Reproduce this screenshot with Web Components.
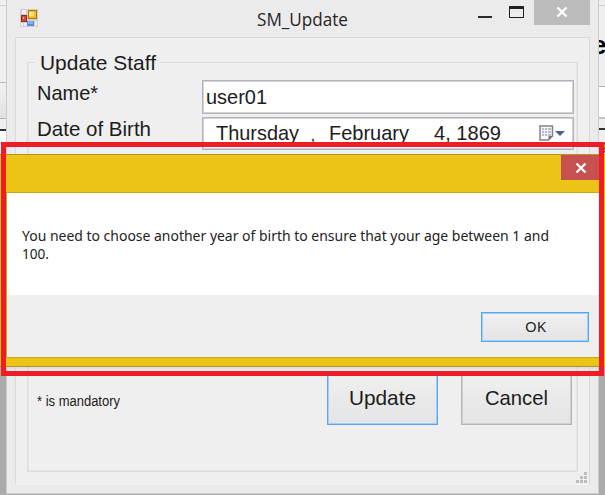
<!DOCTYPE html>
<html lang="en"><head><meta charset="utf-8"><title>SM_Update</title>
<style>
html,body{margin:0;height:100%;overflow:hidden}
body{font-family:"Liberation Sans",Arial,sans-serif;font-size:21px;color:#1c1c20}
</style></head><body>
<sm-desktop>
  <sm-window>
    <fit-label slot="title" w="91">SM_Update</fit-label>
    <group-box>
      <fit-label slot="legend" w="116">Update Staff</fit-label>
      <form-row>
        <fit-label slot="label" w="61">Name*</fit-label>
        <text-field><fit-label w="61">user01</fit-label></text-field>
      </form-row>
      <form-row class="date">
        <fit-label slot="label" w="114">Date of Birth</fit-label>
        <date-field></date-field>
      </form-row>
      <form-footer slot="footer">
        <fit-label slot="note" w="83" style="font-size:14px">* is mandatory</fit-label>
        <push-button primary><fit-label w="67">Update</fit-label></push-button>
        <push-button><fit-label w="63">Cancel</fit-label></push-button>
      </form-footer>
    </group-box>
  </sm-window>
  <message-dialog slot="overlay">
    <fit-label w="527">You need to choose another year of birth to ensure that your age between 1 and</fit-label>
    <fit-label w="27">100.</fit-label>
    <push-button slot="action" primary><fit-label w="21">OK</fit-label></push-button>
  </message-dialog>
  <highlight-frame slot="overlay"></highlight-frame>
</sm-desktop>
<script>
const define=(name,html,ready)=>customElements.define(name,class extends HTMLElement{
  connectedCallback(){
    if(this.shadowRoot)return;
    const t=document.createElement('template');t.innerHTML=html;
    this.attachShadow({mode:'open'}).append(t.content.cloneNode(true));
    if(ready)ready(this);
  }
});
const cross='<svg width="12" height="10" viewBox="0 0 12 10"><path d="M1.5 .5 10.5 9.5M10.5 .5 1.5 9.5" stroke="#fff" stroke-width="2.3"/></svg>';

define('sm-desktop',`<style>
:host{display:grid;position:relative;width:605px;height:495px;overflow:hidden;grid-template-columns:6px 593px 6px;background:#ababab}
.side{height:367px;overflow:hidden;display:flex;flex-direction:column;background:#efefef}
.side *{box-sizing:border-box;flex:none;overflow:hidden}
.a{height:6px;border-bottom:1px solid #cfcfcf}
.b{height:77px;border-bottom:1px solid #b8b8b8}
.c{height:36px;background:linear-gradient(#f1f1f1,#e1e1e1);border-bottom:1px solid #b4b4b4}
.d{height:12px;border-bottom:2px solid #333}
.e{height:236px;background:#fff}
.r1{height:81px;border-bottom:1px solid #b0b0bc;font:bold 26px/30px "Liberation Sans",sans-serif;color:#000;padding-top:24px}
.r1 span{display:block;margin-left:-7px}
.r2{height:32px;background:#fff;border-bottom:2px solid #c4c4c4}
.r3{height:11px;border-bottom:2px solid #333}
.r4{height:236px;padding-top:7px;font:14px/16px "Liberation Sans",sans-serif}
</style><div class="side"><div class="a"></div><div class="b"></div><div class="c"></div><div class="d"></div><div class="e"></div></div>
<slot></slot>
<div class="side"><div class="a"></div><div class="r1"><span>e</span></div><div class="r2"></div><div class="r3"></div><div class="r4">g</div></div>
<slot name="overlay"></slot>`);

define('sm-window',`<style>
:host{display:grid;box-sizing:border-box;height:494px;grid-template-rows:37px 448px;background:#ebebeb;border:1px solid #cdcdcd;border-top:0}
header{display:grid;grid-template-columns:13px 18px 1fr 43px 56px 8px;align-items:start}
.ico{grid-column:2;margin-top:9px;display:block}
.title{display:flex;padding-left:219px;padding-top:5px;font:18px/28px "Open Sans","Noto Sans",sans-serif;color:#262626}
.tools{display:flex;gap:17px;margin-left:-13px}
.min{width:14px;height:2px;background:#2b2b2b;margin-top:16px}
.max{box-sizing:border-box;width:15px;height:12px;border:1px solid #222;border-top-width:3px;margin-top:6px}
.x{width:56px;height:25px;background:#bcbcbc;display:grid;place-items:center;padding:0 1px 2px 0;box-sizing:border-box}
main{box-sizing:border-box;position:relative;margin:0 8px;border:1px solid #d8d8d8;border-bottom-color:#f4f4f4;background:#efefef;padding:24px 11px 0}
.grip{position:absolute;right:2px;bottom:1px}
</style><header><svg class="ico" width="18" height="18" viewBox="0 0 18 18"><path fill="#cfcfcf" d="M0 0h18v18H0z"/><path fill="#eee" d="M2 1h4v4H2zM1 14h2v3H1zM4 14h3v3H4zM15 12h2v5h-2z"/><path fill="#9b241b" d="M1 6h6v7H1z"/><path fill="#d14a3c" d="M2 7h4v5H2z"/><path fill="#edaaa0" d="M3 8h1v2H3z"/><path fill="#a97a16" d="M8 1h9v9H8z"/><path fill="#f5bd21" d="M9 2h7v7H9z"/><path fill="#ffe27a" d="M9 3h5v4H9z"/><path fill="#5b8ae0" d="M7 12h7v5H7z"/><path fill="#7fb0f8" d="M8 12h5v3H8z"/></svg>
<div class="title"><slot name="title"></slot></div><div class="tools"><i class="min"></i><i class="max"></i></div><div class="x">${cross}</div></header>
<main><slot></slot><svg class="grip" width="11" height="11" fill="#bdbdbd"><path d="M8 0h3v3H8zM4 4h3v3H4zM8 4h3v3H8zM0 8h3v3H0zM4 8h3v3H4zM8 8h3v3H8z"/></svg></main>`);

define('group-box',`<style>
:host{box-sizing:border-box;display:flex;flex-direction:column;gap:4px;width:551px;height:410px;border:1px solid #dcdcdc;box-shadow:inset 1px 0 #e6e6e6,inset -1px -1px #e6e6e6}
.legend{align-self:flex-start;margin:-12px 0 1px 7px;padding:0 4px 0 5px;line-height:24px;background:#efefef}
.foot{margin-top:auto;margin-bottom:46px}
</style><div class="legend"><slot name="legend"></slot></div><slot></slot><div class="foot"><slot name="footer"></slot></div>`);

define('form-row',`<style>
:host{display:grid;grid-template-columns:174px 372px;height:33px}
:host(.date){height:32px}
.l{padding-left:9px;line-height:26px}
:host(.date) .l{line-height:24px}
</style><div class="l"><slot name="label"></slot></div><slot></slot>`);

const field='box-sizing:border-box;border:1px solid #b3b3bb;box-shadow:inset 1px 1px #d2d2d8,inset -1px -1px #d2d2d8;background:#fff;';
define('text-field',`<style>:host{display:block;${field}padding-left:3px;line-height:32px}</style><slot></slot>`);

define('date-field',`<style>
:host{display:grid;${field}grid-template-columns:94px 19px 105px 100px 1fr;padding-left:13px;line-height:30px}
span{color:#555;padding-top:1px}
svg{align-self:start;margin-top:7px;margin-left:5px}
</style><fit-label w="83">Thursday</fit-label><span>,</span><fit-label w="80">February</fit-label><fit-label w="67">4, 1869</fit-label>
<svg width="27" height="17" viewBox="0 0 27 17"><path d="M1 1H13.500V11L9.500 15H1Z" fill="#f6f7fa" stroke="#85828a" stroke-width="1.500"/><path d="M3 3h9v8H3z" fill="#b9bdca"/><path d="M3 5.500h9M3 8.500h9M5.500 3v8M8.500 3v8" stroke="#eff1f7"/><path d="M9.500 15v-4h4z" fill="#77747c"/><path d="M16 6h10l-5 5z" fill="#4b618f"/></svg>`);

define('form-footer',`<style>
:host{display:grid;grid-template-columns:290px 111px 23px 111px;grid-template-columns:290px 111px 134px;grid-template-rows:54px;height:54px;padding-left:9px;line-height:60px}
::slotted(push-button){line-height:54px}
::slotted(push-button:last-child){margin-left:23px;width:111px}
</style><slot name="note"></slot><slot></slot>`);

define('push-button',`<style>
:host{box-sizing:border-box;display:flex;justify-content:center;align-items:center;border:1px solid #b5b5b5;box-shadow:inset 0 0 0 1px #cfcfcf;background:linear-gradient(#f0f0f0,#e4e4e4)}
:host([primary]){border-color:#55a6f6;box-shadow:inset 0 0 0 1px #a2cef8}
</style><slot></slot>`);

define('message-dialog',`<style>
:host{position:absolute;left:-1px;top:154px;width:607px;height:213px;box-sizing:border-box;border-top:1px solid #b4951b;border-bottom:1px solid #b4951b;background:#ecc418;display:grid;grid-template-rows:37px 1fr 8px;font:15px/18px "Noto Sans","Open Sans",sans-serif;color:#222;box-shadow:0 3px 4px -1px #b9bdd066}
header{display:flex;justify-content:flex-end;padding-right:5px}
.x{width:40px;height:25px;background:#c75050;display:grid;place-items:center}
.body{margin:0 7px;border:1px solid #c7a51c;border-right:0;background:#efefef;display:grid;grid-template-rows:102px 1fr}
.msg{background:#fff;padding:33px 0 0 15px;display:flex;flex-direction:column}
.act{display:grid;grid-template-columns:108px;grid-template-rows:30px;justify-content:end;padding:17px 10px 0 0}
.act ::slotted(push-button){padding-bottom:2px}
</style><header><div class="x">${cross}</div></header><div class="body"><div class="msg"><slot></slot></div><div class="act"><slot name="action"></slot></div></div>`);

define('highlight-frame',`<style>:host{position:absolute;box-sizing:border-box;left:1px;top:142px;width:603px;height:234px;border:5px solid #ee1c25}</style>`);

// Single-line label condensed or widened to the width given in its "w" attribute.
define('fit-label',`<style>:host{display:block;white-space:nowrap}span{display:inline-block;transform-origin:0 50%}</style><span><slot></slot></span>`,
el=>{const s=el.shadowRoot.querySelector('span'),w=+el.getAttribute('w');
  el.style.width=w+'px';
  s.style.transform='scaleX('+w/s.getBoundingClientRect().width+')';});
</script>
</body></html>
